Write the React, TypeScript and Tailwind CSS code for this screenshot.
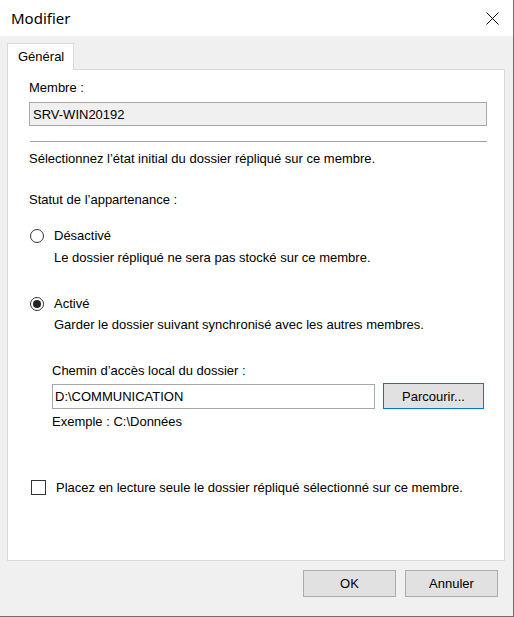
export default function App() {
  return (
    <div className="w-[514px] h-[617px] bg-[#f0f0f0] border-r border-b border-[#6e6e6e] flex flex-col font-['Liberation_Sans',Arial,sans-serif] text-[13px] leading-[15px] text-black">
      {/* barre de titre */}
      <div className="h-[36px] shrink-0 bg-white flex items-center justify-between pl-[11px] pr-[14px]">
        <span className="font-['Noto_Sans',sans-serif] text-[15px] leading-[20px] text-black">Modifier</span>
        <svg width="13" height="13" viewBox="0 0 13 13" className="text-black">
          <path d="M0.5 0.5 L12.5 12.5 M12.5 0.5 L0.5 12.5" stroke="currentColor" strokeWidth="1" fill="none" />
        </svg>
      </div>

      {/* onglets + panneau */}
      <div className="pt-[7px] pl-[7px] pr-[8px] flex flex-col">
        <div className="flex">
          <div className="relative z-10 -mb-px h-[27px] w-[67px] bg-white border-t border-l border-r border-[#d9d9d9] pl-[10px] pt-[5px]">
            Général
          </div>
        </div>
        <div className="h-[492px] bg-white border border-[#d9d9d9] pl-[21px] pr-[17px] pt-[10px] flex flex-col">
          <div>Membre :</div>
          <div className="mt-[7px] h-[24px] border border-[#a8a8a8] bg-[#f0f0f0] flex items-center pl-[3px]">
            SRV-WIN20192
          </div>
          <div className="mt-[15px] ml-px h-px bg-[#a0a0a0]" />
          <div className="mt-[9px]">Sélectionnez l’état initial du dossier répliqué sur ce membre.</div>

          <div className="mt-[26px]">Statut de l’appartenance :</div>

          <div className="mt-[21px] flex items-center gap-[10px] pl-px">
            <span className="w-[14px] h-[14px] rounded-full border border-[#333333] bg-white" />
            <span>Désactivé</span>
          </div>
          <div className="mt-[7px] pl-[25px]">Le dossier répliqué ne sera pas stocké sur ce membre.</div>

          <div className="mt-[31px] flex items-center gap-[10px] pl-px">
            <span className="w-[14px] h-[14px] rounded-full border border-[#333333] bg-white flex items-center justify-center">
              <span className="w-[8px] h-[8px] rounded-full bg-[#222222]" />
            </span>
            <span>Activé</span>
          </div>
          <div className="mt-[6px] pl-[25px]">Garder le dossier suivant synchronisé avec les autres membres.</div>

          <div className="pl-[23px] flex flex-col">
            <div className="mt-[31px]">Chemin d’accès local du dossier :</div>
            <div className="mt-[6px] flex gap-[8px]">
              <div className="w-[323px] h-[25px] border border-[#a8a8a8] bg-white flex items-center pl-[2px]">
                D:\COMMUNICATION
              </div>
              <button className="w-[101px] h-[26px] -mt-px border border-[#0078d7] bg-[#e1e1e1] flex items-center justify-center">
                Parcourir...
              </button>
            </div>
            <div className="mt-[5px]">Exemple : C:\Données</div>
          </div>

          <div className="mt-[51px] flex items-center gap-[10px] pl-[2px]">
            <span className="w-[15px] h-[15px] border border-[#333333] bg-white" />
            <span>Placez en lecture seule le dossier répliqué sélectionné sur ce membre.</span>
          </div>
        </div>
      </div>

      {/* boutons */}
      <div className="mt-[9px] flex justify-end gap-[9px] pr-[15px]">
        <button className="w-[93px] h-[27px] border border-[#adadad] bg-[#e1e1e1] flex items-center justify-center">OK</button>
        <button className="w-[93px] h-[27px] border border-[#adadad] bg-[#e1e1e1] flex items-center justify-center">Annuler</button>
      </div>
    </div>
  );
}
